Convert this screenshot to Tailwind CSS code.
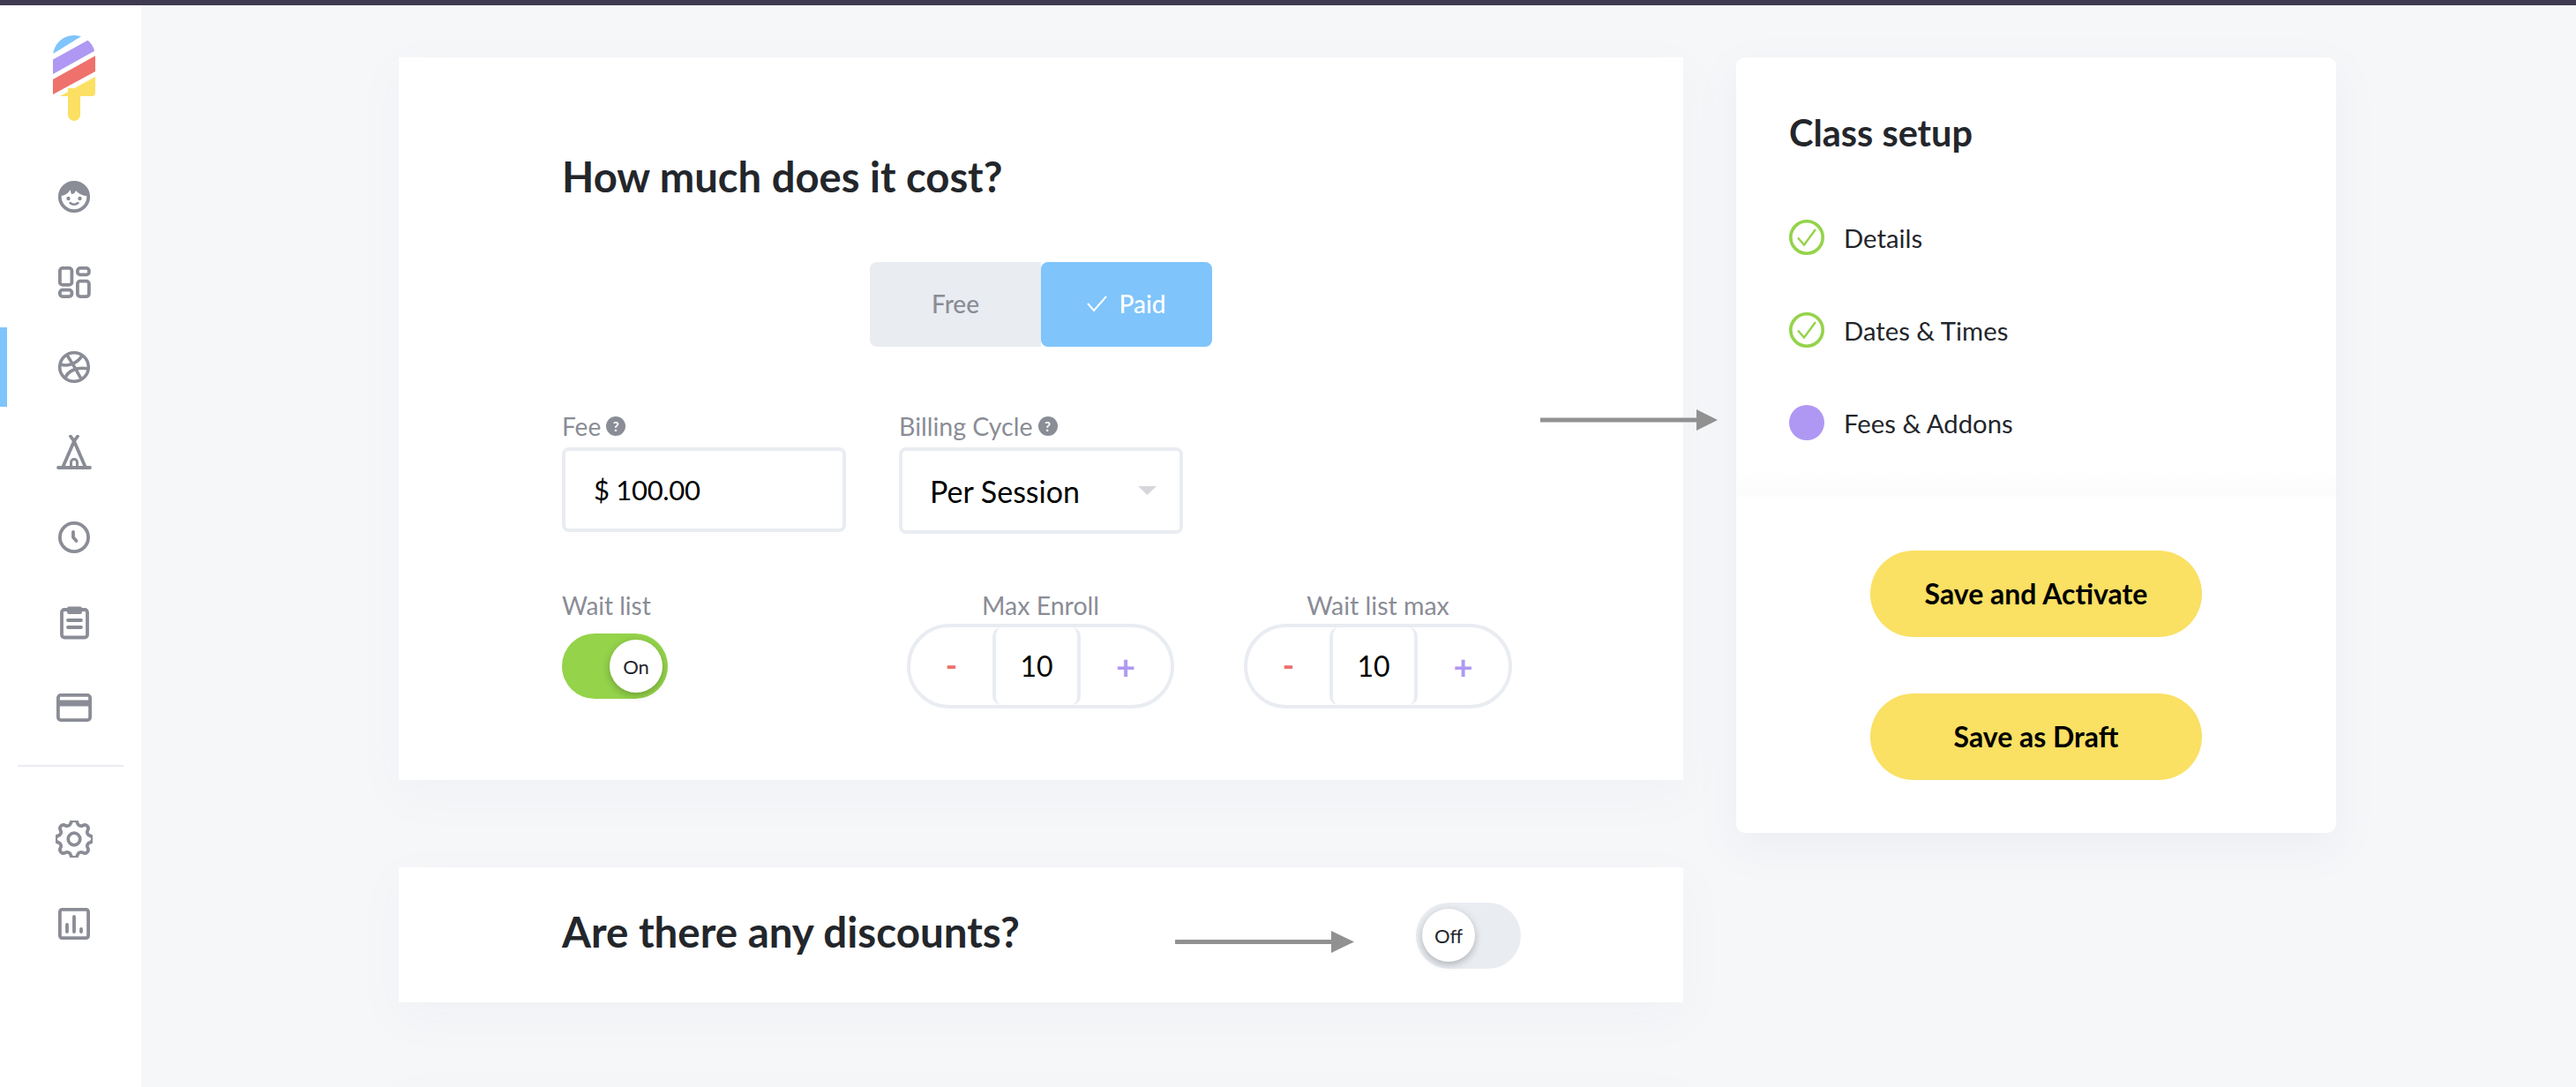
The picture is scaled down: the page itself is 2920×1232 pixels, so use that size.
<!DOCTYPE html>
<html lang="en">
<head>
<meta charset="utf-8">
<title>Class setup</title>
<script src="https://cdn.jsdelivr.net/npm/@tailwindcss/browser@4"></script>
</head>
<body class="m-0 h-[1232px] w-[2920px] overflow-hidden bg-[#f6f7f9] font-['Lato','Noto_Sans',sans-serif] text-[#23262b]">
<div class="h-[6px] bg-[#3f3a4f]"></div>
<div class="flex h-[1226px]">
  <aside class="w-[160px] shrink-0 bg-white pl-[8px] pt-[34px] text-[#8a8c96]">
    <svg class="ml-[52px] block" width="48" height="97" viewBox="0 0 48 97">
      <defs><clipPath id="pop"><path d="M0 69V24A24 24 0 0 1 48 24V65a4 4 0 0 1-4 4H0Z"/></clipPath></defs>
      <path d="M17 60h14v30a7 7 0 0 1-14 0Z" fill="#fbe064"/>
      <g clip-path="url(#pop)">
        <polygon points="0,0 34,0 0,21" fill="#7fc4fb"/>
        <polygon points="0,27.5 48,1 48,17.3 0,44" fill="#af98f3"/>
        <polygon points="0,50 48,23.3 48,41 0,67" fill="#ee716c"/>
        <polygon points="8,69 48,47 48,69" fill="#fbe064"/>
      </g>
    </svg>
    <nav class="mt-[38px]">
      <div class="flex h-[96.5px] items-center justify-center">
        <svg width="40" height="40" viewBox="0 0 40 40" fill="none"><circle cx="20" cy="20" r="16.2" stroke="currentColor" stroke-width="3.8"/><path d="M4 19C5 8 13 3 20 3s15 5 16 16c-6 0-10-2-14-6-1 3-3 4-5 4-.5-1-.8-3-1.500-5-2 4-6 7-11.500 7Z" fill="currentColor"/><circle cx="13.500" cy="22" r="2.200" fill="currentColor"/><circle cx="26.500" cy="22" r="2.200" fill="currentColor"/><path d="M15.500 27c2.500 2.200 6.500 2.200 9 0" stroke="currentColor" stroke-width="2.500" stroke-linecap="round"/></svg>
      </div>
      <div class="flex h-[96.5px] items-center justify-center">
        <svg width="40" height="40" viewBox="0 0 40 40" fill="none" stroke="currentColor" stroke-width="3.8"><rect x="3.900" y="3.900" width="13.500" height="19" rx="3"/><rect x="23.900" y="3.900" width="13" height="7.500" rx="3"/><rect x="3.900" y="28.600" width="13.500" height="7.500" rx="3"/><rect x="23.900" y="18.600" width="13" height="17.500" rx="3"/></svg>
      </div>
      <div class="relative flex h-[96.5px] items-center justify-center">
        <div class="absolute left-[-8px] top-[3px] h-[90px] w-[8px] bg-[#7fc4fb]"></div>
        <svg width="40" height="40" viewBox="0 0 40 40" fill="none" stroke="currentColor" stroke-width="3.600"><circle cx="20" cy="20" r="16.300"/><path d="M12 6.500C17 14 23 24 28 33.500M4.500 17c9 3 19-1 25-10.500M10 32c3-7 13-13 26-10"/></svg>
      </div>
      <div class="flex h-[96.5px] items-center justify-center">
        <svg width="40" height="40" viewBox="0 0 40 40" fill="none" stroke="currentColor" stroke-width="3.800" stroke-linecap="round"><path d="M2 37h36"/><path d="M16 1.500 20 7l4-5.500M20 7 7 37M20 7l13 30"/><path d="M16.500 36v-5a3.500 3.500 0 0 1 7 0v5" stroke-width="3"/></svg>
      </div>
      <div class="flex h-[96.5px] items-center justify-center">
        <svg width="40" height="40" viewBox="0 0 40 40" fill="none" stroke="currentColor" stroke-width="3.800" stroke-linecap="round"><circle cx="20" cy="20" r="16.100"/><path d="M19 14v6l3.500 4"/></svg>
      </div>
      <div class="flex h-[96.5px] items-center justify-center">
        <svg width="40" height="40" viewBox="0 0 40 40" fill="none" stroke="currentColor" stroke-width="3.800"><rect x="6" y="5" width="29" height="31.500" rx="3"/><path d="M14 3.500h13v4.500H14Z" fill="currentColor" stroke-linejoin="round"/><path d="M13 17h15M13 25h15" stroke-linecap="round"/></svg>
      </div>
      <div class="flex h-[96.5px] items-center justify-center">
        <svg width="40" height="40" viewBox="0 0 40 40" fill="none" stroke="currentColor" stroke-width="3.800"><rect x="1.900" y="5.900" width="36.200" height="28.200" rx="3"/><path d="M2 15h36" stroke-width="7"/></svg>
      </div>
      <div class="ml-[-8px] mt-[16px] h-[2px] w-[120px] translate-x-[20px] bg-[#e9ecf1]"></div>
      <div class="mt-[34px] flex h-[96.5px] items-center justify-center">
        <svg width="42" height="42" viewBox="3 3 18 18" fill="none" stroke="currentColor" stroke-width="1.600" stroke-linecap="round" stroke-linejoin="round"><path d="M10.325 4.317c.426-1.756 2.924-1.756 3.35 0a1.724 1.724 0 002.573 1.066c1.543-.94 3.31.826 2.37 2.37a1.724 1.724 0 001.065 2.572c1.756.426 1.756 2.924 0 3.35a1.724 1.724 0 00-1.066 2.573c.94 1.543-.826 3.31-2.37 2.37a1.724 1.724 0 00-2.572 1.065c-.426 1.756-2.924 1.756-3.35 0a1.724 1.724 0 00-2.573-1.066c-1.543.94-3.31-.826-2.37-2.37a1.724 1.724 0 00-1.065-2.572c-1.756-.426-1.756-2.924 0-3.35a1.724 1.724 0 001.066-2.573c-.94-1.543.826-3.31 2.37-2.37.996.608 2.296.07 2.572-1.065z"/><circle cx="12" cy="12" r="2.900"/></svg>
      </div>
      <div class="flex h-[96.5px] items-center justify-center">
        <svg width="40" height="40" viewBox="0 0 40 40" fill="none" stroke="currentColor" stroke-width="3.800" stroke-linecap="round"><rect x="3.900" y="3.900" width="32.200" height="32.200" rx="2.500"/><path d="M12 21v8M20 12v17M28 26v3"/></svg>
      </div>
    </nav>
  </aside>

  <main class="flex items-start gap-[60px] pl-[292px] pt-[59px]">
    <div class="flex w-[1456px] flex-col gap-[99px]">
      <section class="relative h-[819px] bg-white pl-[185px] pt-[107px] shadow-[0_16px_48px_rgba(120,130,150,0.05)]">
        <h2 class="h-[56px] text-[47.2px] font-bold leading-[56px]">How much does it cost?</h2>
        <div class="mt-[69px] flex h-[96px] translate-x-[349px] w-[388px]">
          <div class="flex w-[194px] items-center justify-center rounded-l-[8px] bg-[#e9ecf1] pb-[2px] text-[28px] font-medium text-[#8a8c96]">Free</div>
          <div class="flex w-[194px] items-center justify-center gap-[12px] rounded-[8px] bg-[#7fc4fb] pb-[2px] text-[28px] font-medium text-white">
            <svg width="24" height="20" viewBox="0 0 24 20" fill="none" stroke="white" stroke-width="2"><path d="M1 10l7 8L22 2"/></svg>Paid
          </div>
        </div>
        <div class="mt-[72px] flex gap-[60px]">
          <div class="w-[322px]">
            <div class="flex h-[36px] items-center gap-[6px] text-[28px] text-[#8a8c96]">Fee <span class="flex size-[22px] items-center justify-center rounded-full bg-[#8a8c96] text-[15px] font-bold text-white">?</span></div>
            <div class="mt-[6px] flex h-[96px] items-center rounded-[8px] border-[4px] border-[#e9ecf1] pl-[32px] text-[31px] tracking-[-0.3px] text-black">$ 100.00</div>
          </div>
          <div class="w-[322px]">
            <div class="flex h-[36px] items-center gap-[6px] text-[28.5px] text-[#8a8c96]">Billing Cycle <span class="flex size-[22px] items-center justify-center rounded-full bg-[#8a8c96] text-[15px] font-bold text-white">?</span></div>
            <div class="mt-[6px] flex h-[98px] items-center justify-between rounded-[8px] border-[4px] border-[#e9ecf1] pl-[31px] pr-[26px] text-[34px] text-black">Per Session
              <svg width="21" height="10" viewBox="0 0 21 10"><path d="M0 0h21L10.500 10Z" fill="#d6d7da"/></svg>
            </div>
          </div>
        </div>
        <div class="mt-[63px] flex">
          <div class="w-[391px]">
            <div class="h-[36px] text-[28px] leading-[36px] text-[#8a8c96]">Wait list</div>
            <div class="mt-[14px] flex h-[74px] w-[120px] items-center justify-end rounded-full bg-[#94d34a] pr-[6px]">
              <div class="flex size-[60px] items-center justify-center rounded-full bg-white text-[22px] shadow-[0_3px_8px_rgba(0,0,0,0.25)]">On</div>
            </div>
          </div>
          <div class="w-[303px]">
            <div class="h-[36px] text-center text-[28.5px] leading-[36px] text-[#8a8c96]">Max Enroll</div>
            <div class="mt-[3px] flex h-[96px] rounded-full border-[4px] border-[#e9ecf1]">
              <div class="flex w-[93px] items-center justify-center pb-[4px] text-[36px] font-bold leading-none text-[#ee716c]">-</div>
              <div class="flex w-[100px] items-center justify-center rounded-[10px] border-x-[4px] border-[#e9ecf1] text-[32px] text-black">10</div>
              <div class="flex flex-1 items-center justify-center text-[38px] font-bold leading-none text-[#af98f3]">+</div>
            </div>
          </div>
          <div class="ml-[79px] w-[304px]">
            <div class="h-[36px] text-center text-[28.5px] leading-[36px] text-[#8a8c96]">Wait list max</div>
            <div class="mt-[3px] flex h-[96px] rounded-full border-[4px] border-[#e9ecf1]">
              <div class="flex w-[93px] items-center justify-center pb-[4px] text-[36px] font-bold leading-none text-[#ee716c]">-</div>
              <div class="flex w-[100px] items-center justify-center rounded-[10px] border-x-[4px] border-[#e9ecf1] text-[32px] text-black">10</div>
              <div class="flex flex-1 items-center justify-center text-[38px] font-bold leading-none text-[#af98f3]">+</div>
            </div>
          </div>
        </div>
        <svg class="absolute left-[1294px] top-[399px]" width="201" height="24" viewBox="0 0 201 24"><path d="M0 9.500h177V0l24 12-24 12v-9.500H0Z" fill="#919191"/></svg>
      </section>

      <section class="relative flex h-[153px] items-center bg-white pl-[185px] pr-[184px] shadow-[0_16px_48px_rgba(120,130,150,0.05)]">
        <h2 class="mt-[-7px] text-[47.5px] font-bold leading-[56px]">Are there any discounts?</h2>
        <div class="ml-auto mt-[1px] flex h-[75px] w-[119px] items-center rounded-full bg-[#e9ecf1] pl-[7px]">
          <div class="flex size-[60px] items-center justify-center rounded-full bg-white text-[22px] shadow-[0_3px_8px_rgba(0,0,0,0.25)]">Off</div>
        </div>
        <svg class="absolute left-[880px] top-[72px]" width="203" height="25" viewBox="0 0 203 25"><path d="M0 10h177V0l26 12.500-26 12.500V15H0Z" fill="#919191"/></svg>
      </section>
      <section class="h-[153px] bg-white shadow-[0_16px_48px_rgba(120,130,150,0.05)]"></section>
    </div>

    <aside class="w-[680px] rounded-[10px] bg-white shadow-[0_16px_48px_rgba(120,130,150,0.08)]">
      <div class="h-[498px] rounded-t-[10px] bg-gradient-to-b from-white from-[94%] to-[#fcfcfc] pl-[60px] pt-[60px]">
        <h3 class="h-[50px] text-[41.5px] font-bold leading-[50px]">Class setup</h3>
        <ul class="mt-[74px] flex flex-col gap-[65px] text-[29.3px]">
          <li class="flex h-[40px] items-center gap-[22px]">
            <svg width="40" height="40" viewBox="0 0 40 40" fill="none" stroke="#94d34a"><circle cx="20" cy="20" r="18.200" stroke-width="3.600"/><path d="M10 20.500l7 8L30 11" stroke-width="2.400"/></svg>
            <span class="mt-[2px]">Details</span>
          </li>
          <li class="flex h-[40px] items-center gap-[22px]">
            <svg width="40" height="40" viewBox="0 0 40 40" fill="none" stroke="#94d34a"><circle cx="20" cy="20" r="18.200" stroke-width="3.600"/><path d="M10 20.500l7 8L30 11" stroke-width="2.400"/></svg>
            <span class="mt-[2px]">Dates &amp; Times</span>
          </li>
          <li class="flex h-[40px] items-center gap-[22px]">
            <span class="size-[40px] rounded-full bg-[#af98f3]"></span>
            <span class="mt-[2px]">Fees &amp; Addons</span>
          </li>
        </ul>
      </div>
      <div class="flex flex-col items-center gap-[64px] pb-[60px] pt-[61px]">
        <button class="h-[98px] w-[376px] rounded-full bg-[#fae063] text-[32px] font-bold text-black">Save and Activate</button>
        <button class="h-[98px] w-[376px] rounded-full bg-[#fae063] text-[32px] font-bold text-black">Save as Draft</button>
      </div>
    </aside>
  </main>
</div>
</body>
</html>
